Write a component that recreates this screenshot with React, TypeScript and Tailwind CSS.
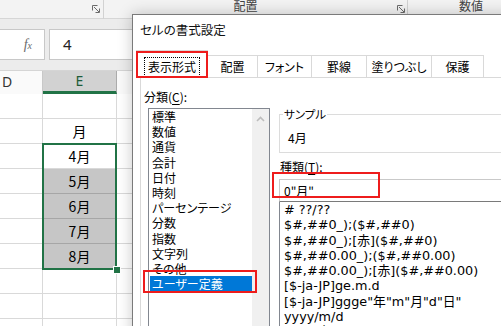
import React from "react";

const Launcher = () => (
  <svg width="8" height="8" viewBox="0 0 8 8" fill="none" stroke="#6b6b6b" strokeWidth="1">
    <path d="M0.5 5.5V0.5H5.5" />
    <path d="M2 2L7 7" />
    <path d="M7.5 3.5V7.5H3.5" />
  </svg>
);

const categories = [
  "標準",
  "数値",
  "通貨",
  "会計",
  "日付",
  "時刻",
  "パーセンテージ",
  "分数",
  "指数",
  "文字列",
  "その他",
  "ユーザー定義",
];

const formats = [
  "# ??/??",
  "$#,##0_);($#,##0)",
  "$#,##0_);[赤]($#,##0)",
  "$#,##0.00_);($#,##0.00)",
  "$#,##0.00_);[赤]($#,##0.00)",
  "[$-ja-JP]ge.m.d",
  '[$-ja-JP]ggge"年"m"月"d"日"',
  "yyyy/m/d",
  'yyyy"年"m"月"d"日"',
];

const rows: { text: string; fill?: boolean; active?: boolean }[] = [
  { text: "" },
  { text: "月" },
  { text: "4月", active: true },
  { text: "5月", fill: true },
  { text: "6月", fill: true },
  { text: "7月", fill: true },
  { text: "8月", fill: true },
  { text: "" },
  { text: "" },
  { text: "" },
];

export default function App() {
  return (
    <div className="relative w-[501px] h-[326px] overflow-hidden bg-white font-['Noto_Sans_CJK_JP',sans-serif] [font-feature-settings:'palt'] text-black">
      {/* Ribbon strip */}
      <div className="flex h-[19px] bg-[#f3f3f3] border-b border-[#d6d6d6] text-[12px] leading-[14px] text-[#444]">
        <div className="w-[100px] flex justify-end items-start pt-[5px] pr-[3px] border-r border-[#d2d2d2] h-[14px] box-content">
          <Launcher />
        </div>
        <div className="w-[304px] flex items-start h-[14px] border-r border-[#d2d2d2]">
          <div className="flex-1 text-center pr-[10px] -mt-[1px]">配置</div>
          <div className="pt-[5px] pr-[2px]">
            <Launcher />
          </div>
        </div>
        <div className="flex-1 pl-[51px] -mt-[1px]">数値</div>
      </div>

      {/* Formula bar band */}
      <div className="h-[51px] bg-[#ececec] pt-[10px] flex gap-[4px]">
        <div className="w-[45px] h-[31px] bg-white border border-l-0 border-[#c8c8c8] flex items-center justify-end pr-[12px]">
          <span className="font-['Liberation_Serif',serif] italic text-[#6b6b6b] text-[14px] leading-none">
            f<span className="text-[10px]">x</span>
          </span>
        </div>
        <div className="flex-1 h-[31px] bg-white border border-[#c8c8c8] flex items-center pl-[13px] text-[15px] font-['Noto_Sans',sans-serif] text-[#222]">
          4
        </div>
      </div>

      {/* Column header */}
      <div className="flex h-[24px] border-t border-[#d5d5d5] text-[14px] leading-[20px] font-['Noto_Sans',sans-serif]">
        <div className="w-[43px] bg-[#fafafa] border-r border-[#c8c8c8] pl-[2px] pt-[1px] text-[#333]">D</div>
        <div className="w-[74px] bg-[#d2d2d2] border-r border-[#ababab] border-b-[3px] border-b-[#217346] text-center text-[#1d5c3a]">
          E
        </div>
        <div className="flex-1 bg-[#fafafa]" />
      </div>

      {/* Grid rows */}
      <div className="flex flex-col">
        {rows.map((r, i) => (
          <div key={i} className="flex h-[25px]">
            <div className="w-[43px] border-r border-b border-[#d9d9d9]" />
            <div
              className={
                "w-[74px] border-r border-b flex items-center justify-center text-[14px] leading-none " +
                (r.fill ? "bg-[#c6c6c6] border-b-[#a6a6a6] border-r-[#d9d9d9]" : "border-[#d9d9d9]")
              }
            >
              {r.text}
            </div>
            <div className="flex-1 border-b border-[#d9d9d9]" />
          </div>
        ))}
      </div>

      {/* Selection border */}
      <div className="absolute left-[42px] top-[143px] w-[75px] h-[127px] border-2 border-[#217346]" />
      <div className="absolute left-[113px] top-[266px] w-[6px] h-[6px] bg-[#217346] border border-white box-content" />

      {/* Dialog */}
      <div className="absolute left-[132px] top-[14px] w-[400px] h-[340px] bg-white border border-[#7a7a7a] shadow-[0_0_14px_rgba(0,0,0,0.22)] text-[12px]">
        <div className="h-[31px] flex items-center pl-[7px] text-[12.5px] text-[#111]">セルの書式設定</div>

        {/* Tabs */}
        <div className="mt-[4px] h-[27px] flex items-end pl-[3px] leading-[14px]">
          <div className="relative z-10 w-[72px] h-[28px] -mb-px bg-white border border-b-0 border-[#d9d9d9] flex items-center justify-center">
            <span className="px-[4px] py-[3px] mt-[4px] outline-1 outline-dotted outline-black -outline-offset-1">表示形式</span>
          </div>
          {[
            ["配置", 50],
            ["フォント", 54],
            ["罫線", 55],
            ["塗りつぶし", 65],
            ["保護", 52],
          ].map(([t, w]) => (
            <div
              key={t as string}
              style={{ width: w as number }}
              className="h-[22px] bg-white border border-l-0 border-b-0 border-[#d9d9d9] flex items-center justify-center pt-[1px]"
            >
              {t}
            </div>
          ))}
        </div>

        {/* Panel */}
        <div className="ml-[7px] border-l border-t border-[#d9d9d9] h-[300px] flex">
          {/* Left column */}
          <div className="w-[129px] flex flex-col">
            <div className="pl-[3px] pt-[12px] leading-[14px]">
              分類(<span className="underline underline-offset-2">C</span>):
            </div>
            <div className="ml-[7px] mt-[4px] w-[122px] h-[230px] border border-[#828790] flex">
              <div className="flex-1 pl-[1px] pt-0 flex flex-col">
                {categories.map((c) => (
                  <div
                    key={c}
                    className={
                      "h-[15.2px] leading-[15.2px] pl-[2px] whitespace-nowrap " +
                      (c === "ユーザー定義" ? "bg-[#0078d7] text-white" : "")
                    }
                  >
                    {c}
                  </div>
                ))}
              </div>
              <div className="w-[17px] bg-[#f0f0f0] flex justify-center pt-[7px]">
                <svg width="9" height="6" viewBox="0 0 9 6" fill="none" stroke="#bdbdbd" strokeWidth="1.6">
                  <path d="M1 5L4.5 1.5L8 5" />
                </svg>
              </div>
            </div>
          </div>

          {/* Right column */}
          <div className="ml-[9px] flex-1 flex flex-col pt-[29px]">
            <fieldset className="h-[46px] border border-[#dcdcdc] pl-[3px] pt-[10px] leading-[14px]">
              <legend className="px-[1px] leading-[14px] text-[11.5px]">サンプル</legend>
              <div className="pl-[5px]">4月</div>
            </fieldset>
            <div className="mt-[7px] pl-[1px] leading-[14px]">
              種類(<span className="underline underline-offset-2">T</span>):
            </div>
            <div className="mt-[5px] h-[23px] border border-[#c9c9c9] border-b-[#7a7a7a] flex items-center pl-[4px]">
              0"月"
            </div>
            <div className="flex-1 border-l border-[#828790] pl-[4px] pt-0 flex flex-col font-['DejaVu_Sans','Noto_Sans_CJK_JP',sans-serif] text-[12.8px]">
              {formats.map((f) => (
                <div key={f} className="h-[15.25px] leading-[15.25px] whitespace-nowrap">
                  {f}
                </div>
              ))}
            </div>
          </div>
        </div>
      </div>

      {/* Red annotation boxes */}
      <div className="absolute left-[136px] top-[51px] w-[72px] h-[27px] border-2 border-[#ee1c1c] z-20" />
      <div className="absolute left-[143px] top-[270px] w-[114px] h-[23px] border-2 border-[#ee1c1c] z-20" />
      <div className="absolute left-[272px] top-[172px] w-[108px] h-[26px] border-2 border-[#ee1c1c] z-20" />
    </div>
  );
}
